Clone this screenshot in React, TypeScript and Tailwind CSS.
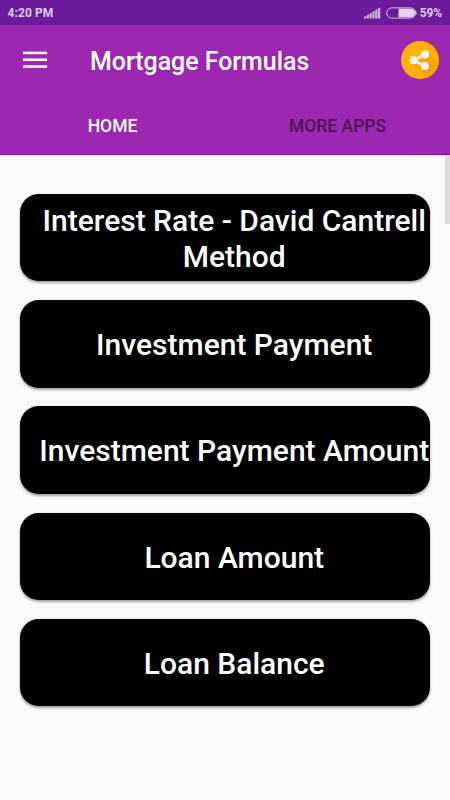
import React from 'react';

const formulas: string[] = [
  'Interest Rate - David Cantrell Method',
  'Investment Payment',
  'Investment Payment Amount',
  'Loan Amount',
  'Loan Balance',
];

function StatusBar() {
  return (
    <div className="flex h-[25px] items-center bg-[#6a1b9a] pl-[7.5px] pr-[8px] text-[12px] font-bold text-[#dfcbea]">
      <span className="tracking-[0.1px]">4:20 PM</span>
      <svg className="ml-auto" width="17" height="12" viewBox="0 0 17 12" fill="#cdb5dc">
        <path d="M0 10 2.2 8.8V11.5H0zM2.8 8.5l2.2-1.3v4.3H2.8zM5.6 6.8l2.2-1.3v6H5.6zM8.4 5l2.2-1.3v7.8H8.4zM11.2 3.3l2.2-1.3v9.5h-2.2zM14 1.6l2.2-1.2v11.1H14z" />
      </svg>
      <svg className="ml-[4.5px]" width="32" height="12" viewBox="0 0 32 12">
        <rect x="0.7" y="0.9" width="29" height="10.2" rx="5.1" fill="none" stroke="#d5c0e2" strokeWidth="1" />
        <path d="M12.5 1.8h12.4a4.2 4.2 0 0 1 0 8.4H12.5z" fill="#e3d2ec" />
        <path d="M30.3 3.8q1.5 2.2 0 4.4z" fill="#d5c0e2" />
      </svg>
      <span className="ml-[2px] tracking-[-0.1px]">59%</span>
    </div>
  );
}

function ShareIcon() {
  return (
    <svg width="38" height="38" viewBox="0 0 38 38">
      <defs>
        <clipPath id="disc">
          <circle cx="19" cy="19" r="19" />
        </clipPath>
      </defs>
      <circle cx="19" cy="19" r="19" fill="#ffb300" />
      <path clipPath="url(#disc)" d="M27 10.5 40 23.5V40H28L10 22l9-2z" fill="#f6a500" />
      <path d="M24 13.5 12.5 19.3 24 25" fill="none" stroke="#f5f5f5" strokeWidth="2.6" />
      <circle cx="24" cy="13.4" r="4" fill="#f5f5f5" />
      <circle cx="12.5" cy="19.2" r="4" fill="#f5f5f5" />
      <circle cx="24" cy="24.9" r="4" fill="#f5f5f5" />
    </svg>
  );
}

function MenuIcon() {
  return (
    <svg width="24" height="18" viewBox="0 0 24 18" fill="#ffffff">
      <rect y="0.7" width="24" height="2.5" />
      <rect y="7.5" width="24" height="2.5" />
      <rect y="14.3" width="24" height="2.5" />
    </svg>
  );
}

export default function App() {
  return (
    <div className="flex h-[800px] w-[450px] flex-col overflow-hidden bg-[#fafafa] font-['Roboto',sans-serif]">
      <StatusBar />
      <header className="flex h-[130px] flex-col border-b border-[#8e0aa2] bg-[#9c27b0] text-white">
        <div className="flex h-[70px] items-center pl-[23px] pr-[11px]">
          <button aria-label="Menu">
            <MenuIcon />
          </button>
          <h1 className="ml-[43px] mt-[2px] text-[24.9px] leading-[25px] font-medium">Mortgage Formulas</h1>
          <button aria-label="Share" className="ml-auto">
            <ShareIcon />
          </button>
        </div>
        <nav className="grid h-[59px] grid-cols-2 items-center pt-[3px] text-center text-[17.5px] font-medium">
          <span>HOME</span>
          <span className="text-[#4e1458]">MORE APPS</span>
        </nav>
      </header>
      <main className="flex flex-1 items-start pl-5">
        <div className="flex w-[410px] flex-col gap-[18.75px] pt-[38.75px]">
          {formulas.map((name) => (
            <button
              key={name}
              className="flex h-[87.5px] items-center justify-center rounded-[18.75px] bg-black pt-[2px] pl-[18.5px] text-center text-[30px] leading-[35.2px] font-medium text-white shadow-[0_1.5px_2.5px_rgba(0,0,0,0.35)]"
            >
              {name}
            </button>
          ))}
        </div>
        <div className="ml-auto h-[69px] w-[5px] bg-[#dcdcdc]" />
      </main>
    </div>
  );
}
